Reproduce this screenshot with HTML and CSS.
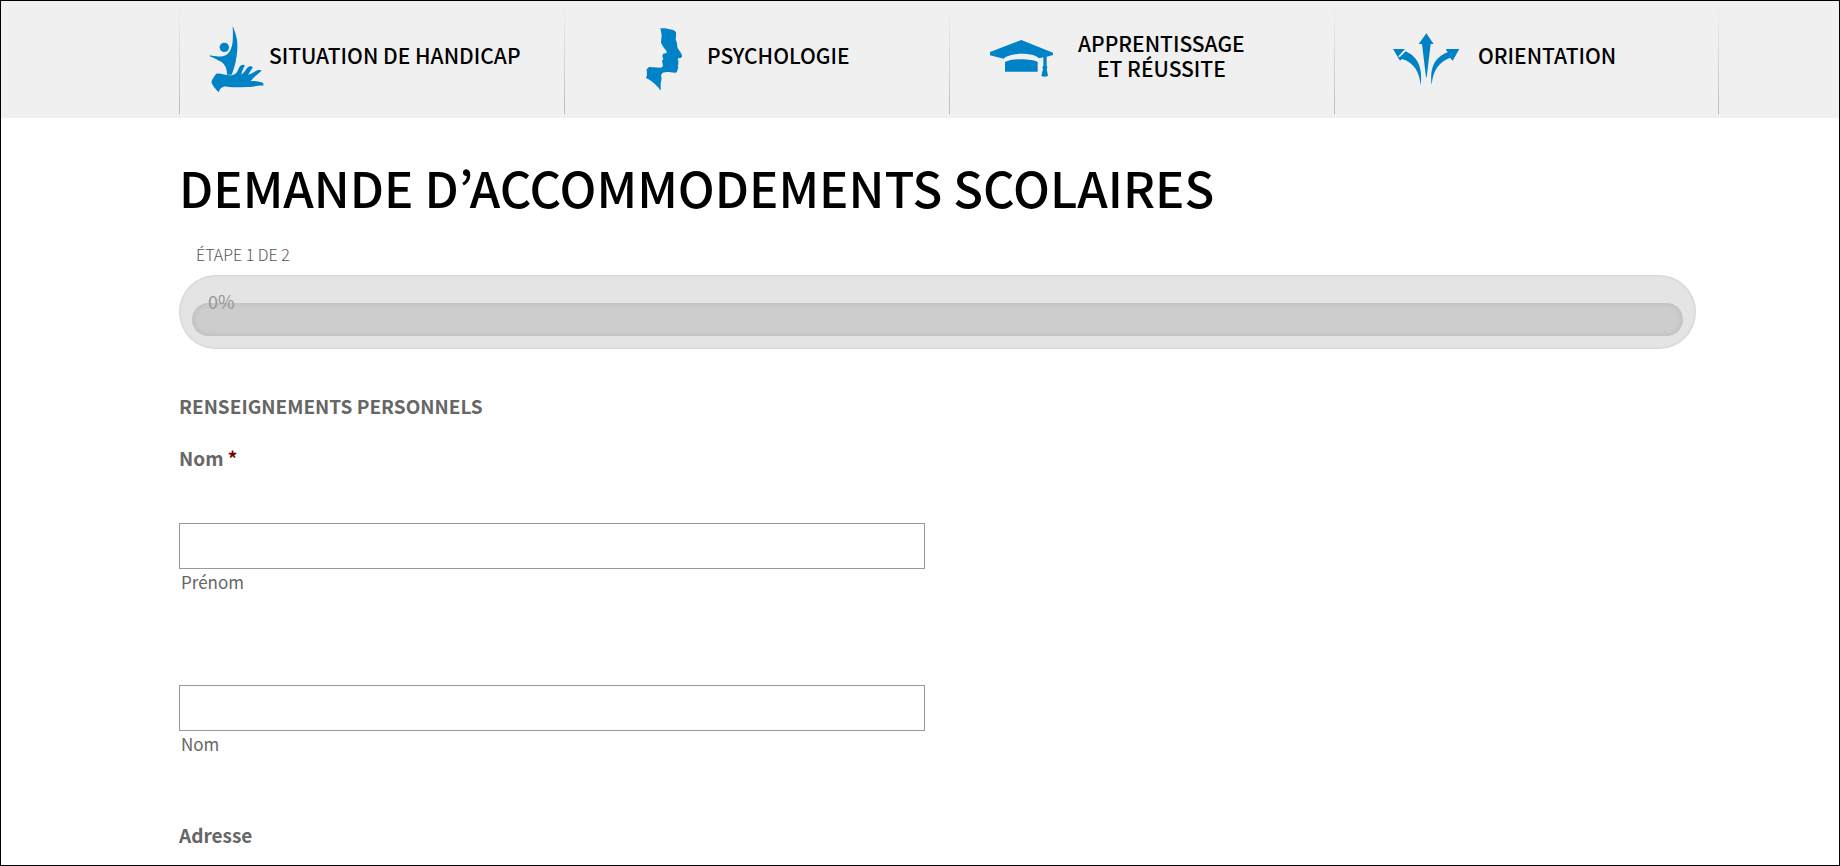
FILE: index.html
```html
<!DOCTYPE html>
<html lang="fr">
<head>
    <meta charset="UTF-8">
    <meta name="viewport" content="width=device-width, initial-scale=1.0">
    <title>Demande d’accommodements scolaires</title>
    <link rel="stylesheet" href="styles.css">
</head>
<body>
<div class="page">

    <nav class="services">
        <a class="service handicap" href="#">
            <svg width="54" height="70" viewBox="30 15 162 210" aria-hidden="true">
                <circle cx="73" cy="82" r="14"/>
                <path d="M99 20C107 40 114 60 112 86C111 112 105 140 95 164H81C81 142 72 127 54 121C46 116 38 112 29 109V106C50 111 68 111 80 104C96 92 101 70 98 20Z"/>
                <path d="M34 185C38 176 43 167 49 161C60 158 76 166 90 166C102 166 110 162 115 148C118 139 122 135 128 134C133 134 135 136 133 140C128 147 126 155 124 164C131 159 137 150 142 143C147 138 154 137 158 141C158 146 149 154 145 165C155 160 164 154 172 151C179 149 185 150 184 153C176 160 161 172 152 183C164 182 177 184 185 187C191 190 192 195 189 197C175 195 160 202 140 201C120 203 96 202 82 200C68 198 58 205 57 217C46 208 38 197 34 185Z"/>
            </svg>
            <span class="service-name">SITUATION DE HANDICAP</span>
        </a>
        <a class="service psychologie" href="#">
            <svg width="37" height="70" viewBox="33 15 111 210" aria-hidden="true">
                <path d="M76 25L90 25L115 30L123 36V48L122 58L126 70L127 81C130 91 141 98 141 109L138 114L130 114L128 121L131 124L129 129L131 132L128 136L130 142L126 155C123 161 108 156 95 156L83 158L78 166L80 175L77 190V212C68 199 54 184 33 174L36 165L35 148L42 141L78 143L84 138L81 122L85 118L82 109L84 101L95 99L94 92L87 84L78 69L80 45Z"/>
            </svg>
            <span class="service-name">PSYCHOLOGIE</span>
        </a>
        <a class="service reussite" href="#">
            <svg width="64" height="70" viewBox="30 -15 192 210" aria-hidden="true">
                <path d="M30 66L124 30L219 68V75L200 80V107Q204 112 200 117L204 137Q194 143 184 137L189 117Q185 112 190 107V82L177 85C160 67 90 67 71 86L30 76Z"/>
                <path d="M75 125V96C95 85 153 85 173 96V125Z"/>
            </svg>
            <span class="service-name">APPRENTISSAGE<br>ET RÉUSSITE</span>
        </a>
        <a class="service orientation" href="#">
            <svg width="67" height="70" viewBox="24 0 201 210" aria-hidden="true">
                <path d="M124 25L146 57H137L125 157H123L111 57H101Z"/>
                <path d="M24 72H60L40 94L44 97L62 79C91 93 115 117 107 182C104 142 87 112 51 102L45 107Z"/>
                <path d="M223 72L203 107L195 98C160 113 144 136 140 180C134 130 147 98 188 82L182 72Z"/>
            </svg>
            <span class="service-name">ORIENTATION</span>
        </a>
    </nav>

    <main class="content">
        <h1 class="title">DEMANDE D’ACCOMMODEMENTS SCOLAIRES</h1>

        <form class="form">
            <p class="step">ÉTAPE 1 DE 2</p>
            <div class="progress">
                <div class="progress-bar"></div>
                <span class="progress-value">0%</span>
            </div>

            <h2 class="section-title">RENSEIGNEMENTS PERSONNELS</h2>

            <fieldset class="group">
                <legend class="legend">Nom <span class="required">*</span></legend>
                <div class="field">
                    <input type="text" id="prenom" name="prenom" required>
                    <label for="prenom">Prénom</label>
                </div>
                <div class="field">
                    <input type="text" id="nom" name="nom" required>
                    <label for="nom">Nom</label>
                </div>
            </fieldset>

            <fieldset class="group">
                <legend class="legend">Adresse</legend>
            </fieldset>
        </form>
    </main>

</div>
</body>
</html>
```
FILE: styles.css
```css
* {
    box-sizing: border-box;
}

body {
    margin: 0;
    background-color: #fff;
    color: #666;
    font-family: "Noto Sans CJK JP", "Noto Sans", sans-serif;
}

.page {
    min-height: 100vh;
    border: 1px solid #000;
}

/* Services bar */
.services {
    display: grid;
    grid-template-columns: repeat(4, 1fr);
    padding: 4px 120px 4px 178px;
    background-color: #f0f0f0;
}

.service {
    display: flex;
    align-items: center;
    height: 109px;
    color: #000;
    text-decoration: none;
    background: linear-gradient(#f0f0f0, #bbb) left / 1px 100% no-repeat;
}

.service:last-child {
    background: linear-gradient(#f0f0f0, #bbb) left / 1px 100% no-repeat,
                linear-gradient(#f0f0f0, #bbb) right / 1px 100% no-repeat;
}

.service svg {
    flex: none;
    overflow: visible;
    fill: #0082c6;
}

.service-name {
    padding-bottom: 8px;
    font-size: 21px;
    font-weight: 500;
    line-height: 25px;
    text-align: center;
    white-space: nowrap;
}

.handicap {
    padding-left: 31px;
    gap: 5px;
}

.psychologie {
    padding-left: 82px;
    gap: 24px;
}

.reussite {
    padding-left: 41px;
    gap: 24px;
}

.orientation {
    padding-left: 59px;
    gap: 18px;
}

/* Content */
.content {
    padding: 32px 143px 0 178px;
}

.title {
    margin: 0;
    color: #000;
    font-size: 49px;
    font-weight: 500;
    line-height: 74px;
}

.step {
    margin: 18px 0 9px;
    padding-left: 17px;
    color: #555;
    font-size: 16px;
    font-weight: 300;
    line-height: 24px;
}

.progress {
    position: relative;
    padding: 28px 13px 13px;
    border-radius: 37px;
    background-color: #e4e4e4;
    box-shadow: inset 0 0 3px rgba(0, 0, 0, 0.15);
}

.progress-bar {
    height: 33px;
    border-radius: 17px;
    background-color: #cdcdcd;
    box-shadow: inset 0 0 6px rgba(0, 0, 0, 0.1);
}

.progress-value {
    position: absolute;
    top: 14px;
    left: 29px;
    color: #959595;
    font-size: 18px;
    line-height: 24px;
}

.section-title,
.legend {
    padding: 0;
    font-size: 19px;
    font-weight: 700;
    line-height: 28px;
}

.section-title {
    margin: 43px 0 24px;
}

.required {
    color: #790000;
}

.group {
    margin: 0;
    padding: 0;
    border: 0;
}

.group + .group {
    margin-top: 65px;
}

.field {
    padding-top: 51px;
}

.field + .field {
    padding-top: 91px;
}

.field input {
    display: block;
    width: 49.2%;
    height: 46px;
    padding: 0 10px;
    border: 1px solid #999;
    background-color: #fff;
    font: inherit;
}

.field label {
    display: block;
    padding: 1px 2px 0;
    font-size: 17px;
    line-height: 24px;
}
```
